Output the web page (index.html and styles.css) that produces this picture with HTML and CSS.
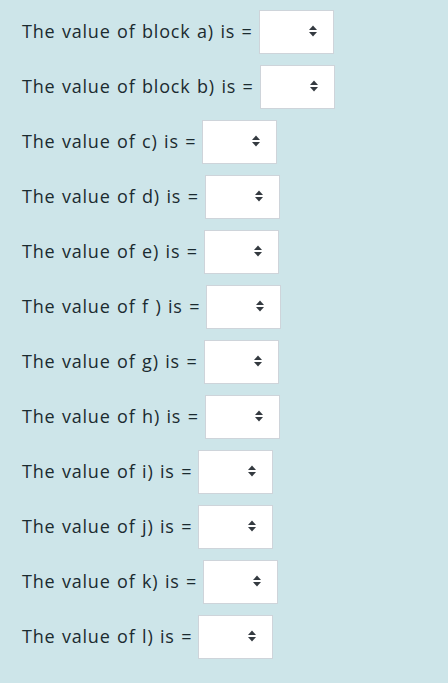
FILE: index.html
```html
<!DOCTYPE html>
<html lang="en">
<head>
<meta charset="utf-8">
<title>Values</title>
<link rel="stylesheet" href="styles.css">
</head>
<body>
<div class="form">
  <div class="row"><span class="label">The value of block a) is =</span><span class="select"><svg class="sort" viewBox="0 0 8 12" width="8" height="12"><polygon points="0,5 4,0.5 8,5"/><polygon points="0,7 8,7 4,11.5"/></svg></span></div>
  <div class="row"><span class="label">The value of block b) is =</span><span class="select"><svg class="sort" viewBox="0 0 8 12" width="8" height="12"><polygon points="0,5 4,0.5 8,5"/><polygon points="0,7 8,7 4,11.5"/></svg></span></div>
  <div class="row"><span class="label">The value of c) is =</span><span class="select"><svg class="sort" viewBox="0 0 8 12" width="8" height="12"><polygon points="0,5 4,0.5 8,5"/><polygon points="0,7 8,7 4,11.5"/></svg></span></div>
  <div class="row"><span class="label">The value of d) is =</span><span class="select"><svg class="sort" viewBox="0 0 8 12" width="8" height="12"><polygon points="0,5 4,0.5 8,5"/><polygon points="0,7 8,7 4,11.5"/></svg></span></div>
  <div class="row"><span class="label">The value of e) is =</span><span class="select"><svg class="sort" viewBox="0 0 8 12" width="8" height="12"><polygon points="0,5 4,0.5 8,5"/><polygon points="0,7 8,7 4,11.5"/></svg></span></div>
  <div class="row"><span class="label">The value of f ) is =</span><span class="select"><svg class="sort" viewBox="0 0 8 12" width="8" height="12"><polygon points="0,5 4,0.5 8,5"/><polygon points="0,7 8,7 4,11.5"/></svg></span></div>
  <div class="row"><span class="label">The value of g) is =</span><span class="select"><svg class="sort" viewBox="0 0 8 12" width="8" height="12"><polygon points="0,5 4,0.5 8,5"/><polygon points="0,7 8,7 4,11.5"/></svg></span></div>
  <div class="row"><span class="label">The value of h) is =</span><span class="select"><svg class="sort" viewBox="0 0 8 12" width="8" height="12"><polygon points="0,5 4,0.5 8,5"/><polygon points="0,7 8,7 4,11.5"/></svg></span></div>
  <div class="row"><span class="label">The value of i) is =</span><span class="select"><svg class="sort" viewBox="0 0 8 12" width="8" height="12"><polygon points="0,5 4,0.5 8,5"/><polygon points="0,7 8,7 4,11.5"/></svg></span></div>
  <div class="row"><span class="label">The value of j) is =</span><span class="select"><svg class="sort" viewBox="0 0 8 12" width="8" height="12"><polygon points="0,5 4,0.5 8,5"/><polygon points="0,7 8,7 4,11.5"/></svg></span></div>
  <div class="row"><span class="label">The value of k) is =</span><span class="select"><svg class="sort" viewBox="0 0 8 12" width="8" height="12"><polygon points="0,5 4,0.5 8,5"/><polygon points="0,7 8,7 4,11.5"/></svg></span></div>
  <div class="row"><span class="label">The value of l) is =</span><span class="select"><svg class="sort" viewBox="0 0 8 12" width="8" height="12"><polygon points="0,5 4,0.5 8,5"/><polygon points="0,7 8,7 4,11.5"/></svg></span></div>
</div>
</body>
</html>
```

FILE: styles.css
```css
html, body {
  margin: 0;
  padding: 0;
  background: #cde5e9;
  height: 100%;
}

body {
  font-family: "Open Sans", "DejaVu Sans", sans-serif;
  font-size: 18px;
  color: #1b2b30;
}

.form {
  display: flex;
  flex-direction: column;
  gap: 11px;
  padding: 10px 0 0 22px;
}

.row {
  display: flex;
  align-items: center;
  gap: 6px;
  height: 44px;
}

.label {
  white-space: nowrap;
  letter-spacing: 0.8px;
  word-spacing: 1px;
  padding-bottom: 2px;
}

.select {
  box-sizing: border-box;
  width: 75px;
  height: 44px;
  background: #ffffff;
  border: 1px solid #ced4da;
  display: flex;
  align-items: center;
  padding-left: 49px;
  padding-bottom: 3px;
}

.sort {
  display: block;
  fill: #343a40;
}
```
